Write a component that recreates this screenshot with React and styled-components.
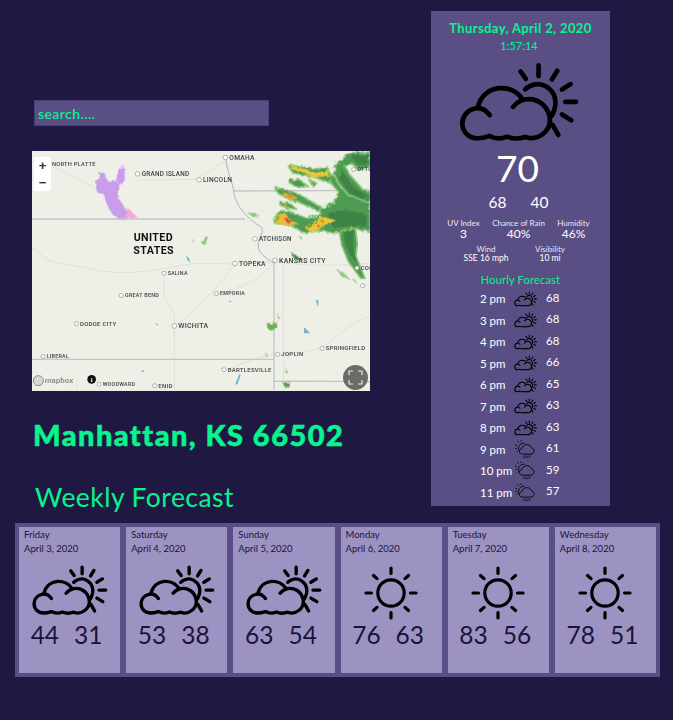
import React from 'react';
import styled, { createGlobalStyle } from 'styled-components';

const GREEN = '#06f58e';
const NAVY = '#1f1842';
const PURPLE = '#5a4f85';

const Global = createGlobalStyle`
body {
    margin: 0;
    background: ${NAVY};
    font-family: "Lato", "Open Sans", sans-serif;
}
`;

const Page = styled.div`
width: 673px;
height: 720px;
padding-top: 11px;
box-sizing: border-box;
overflow: hidden;
`;

const Top = styled.div`
display: flex;
align-items: flex-start;
`;

const Left = styled.div`
width: 338px;
margin-left: 32px;
padding-top: 89px;
`;

const Search = styled.input`
display: block;
box-sizing: border-box;
width: 235px;
height: 26px;
margin-left: 2px;
padding: 0 3px;
border: 1px solid #4a4076;
background: ${PURPLE};
color: ${GREEN};
font: 600 14px "Lato", sans-serif;
letter-spacing: 0.4px;
outline: none;
&::placeholder {
    color: ${GREEN};
    opacity: 1;
}
`;

const MapBox = styled.div`
position: relative;
width: 338px;
height: 240px;
margin-top: 25px;
background: #eef0e7;
overflow: hidden;
svg.base {
    display: block;
    filter: blur(0.35px);
}
`;

const ZoomCtl = styled.div`
position: absolute;
left: 2px;
top: 6px;
width: 17px;
height: 34px;
background: #fff;
border-radius: 2px;
display: flex;
flex-direction: column;
align-items: center;
justify-content: space-around;
font: 700 13px/17px "Liberation Sans", sans-serif;
color: #333;
`;

const Fullscreen = styled.div`
position: absolute;
right: 2px;
bottom: 1px;
width: 25px;
height: 25px;
border-radius: 50%;
background: #6c6c66;
display: flex;
align-items: center;
justify-content: center;
`;

const City = styled.h1`
margin: 29px 0 0 1px;
color: ${GREEN};
font-size: 29px;
line-height: 30px;
font-weight: 900;
letter-spacing: 1.45px;
white-space: nowrap;
-webkit-text-stroke: 0.5px ${GREEN};
`;

const WeekTitle = styled.h2`
margin: 33px 0 0 3px;
color: ${GREEN};
font-size: 26.5px;
line-height: 28px;
font-weight: 400;
letter-spacing: 0.45px;
white-space: nowrap;
`;

const Panel = styled.aside`
box-sizing: border-box;
width: 179px;
height: 495px;
margin-left: 61px;
padding-top: 9px;
background: ${PURPLE};
color: #fff;
text-align: center;
`;

const DateLine = styled.div`
color: ${GREEN};
font-size: 13px;
line-height: 16px;
font-weight: 700;
letter-spacing: 0.38px;
white-space: nowrap;
`;

const Clock = styled.div`
color: ${GREEN};
font-size: 11px;
line-height: 14px;
margin-top: 3px;
padding-right: 3px;
`;

const BigIcon = styled.div`
display: flex;
justify-content: center;
margin-top: 9px;
padding-right: 4px;
height: 81px;
`;

const Temp = styled.div`
font-size: 37px;
line-height: 40px;
margin-top: 5px;
padding-right: 6px;
`;

const HiLo = styled.div`
display: flex;
justify-content: center;
gap: 24px;
font-size: 15.5px;
line-height: 18px;
margin-top: 5px;
padding-right: 4px;
`;

const Stats = styled.div`
display: grid;
grid-template-columns: repeat(3, 55px);
padding-left: 5px;
margin-top: 7px;
`;

const StatsTwo = styled.div`
display: grid;
grid-template-columns: repeat(2, 64px);
padding-left: 23px;
margin-top: 4px;
`;

const Stat = styled.div`
font-size: 8px;
line-height: 10px;
white-space: nowrap;
color: #e9e6f4;
`;

const StatValue = styled.div`
font-size: ${props => props.small ? 8.5 : 12}px;
line-height: ${props => props.small ? 9 : 12}px;
color: #fff;
`;

const HourlyTitle = styled.div`
color: ${GREEN};
font-size: 11px;
line-height: 14px;
margin-top: 10px;
letter-spacing: 0.2px;
`;

const Hourly = styled.div`
margin-top: 1px;
`;

const HourRow = styled.div`
display: flex;
align-items: center;
height: 21.5px;
padding-left: 49px;
font-size: 11.5px;
text-align: left;
`;

const HourTime = styled.span`
width: 33px;
white-space: nowrap;
`;

const HourIcon = styled.span`
display: flex;
justify-content: center;
width: 24px;
`;

const HourTemp = styled.span`
margin-left: 9px;
margin-top: -3px;
`;

const Week = styled.section`
display: flex;
gap: 6px;
box-sizing: border-box;
width: 645px;
height: 154px;
margin: 12px 0 0 15px;
padding: 4px;
background: ${PURPLE};
`;

const Card = styled.article`
flex: 1;
box-sizing: border-box;
padding: 1px 5px;
background: #9c93c2;
color: #1a133b;
`;

const CardLine = styled.div`
font-size: 9.5px;
line-height: 13.5px;
white-space: nowrap;
`;

const CardIcon = styled.div`
display: flex;
justify-content: center;
align-items: ${props => props.cloud ? 'flex-start' : 'center'};
height: 56px;
margin-top: 10px;
`;

const CardTemps = styled.div`
display: flex;
justify-content: center;
gap: 15px;
padding-right: 6px;
font-size: 24.5px;
line-height: 28px;
`;

const CloudSun = ({ width, height, stroke = 14 }) => (
    <svg width={width} height={height} viewBox="25 8 362 242" fill="none" stroke="#000" strokeWidth={stroke} strokeLinecap="round" strokeLinejoin="round">
        <path d="M120 167 C108 150 92 143 75 147 C52 152 38 170 38 192 C38 218 58 236 84 236 C96 236 108 233 120 229 C136 238 156 238 172 231 C188 238 208 238 226 232 C240 238 262 236 278 224 C296 210 304 190 298 168 C290 134 258 114 226 120 C210 123 198 132 190 142" />
        <path d="M84 144 C92 110 118 88 150 86 C176 85 200 96 214 114" />
        <path d="M226 90 C242 74 268 68 290 82 C316 98 326 130 306 168" />
        <path d="M212 36 L228 58 M266 18 L266 50 M322 34 L306 60 M336 90 L362 74 M346 127 L378 127 M336 165 L364 182 M308 196 L325 226" />
    </svg>
);

const Sun = () => (
    <svg width="56" height="56" viewBox="0 0 56 56" fill="none" stroke="#000" strokeWidth="3.2" strokeLinecap="round">
        <circle cx="28" cy="28" r="13.2" />
        <path d="M28 3 V8.5 M28 47.5 V53 M3 28 H8.5 M47.5 28 H53 M10.5 10.5 L14 13.6 M42 42.4 L45.5 45.5 M45.5 10.5 L42 13.6 M14 42.4 L10.5 45.5" />
    </svg>
);

const RainSun = () => (
    <svg width="20" height="19" viewBox="254 518 60 56" fill="none" stroke="#000" strokeWidth="2.7" strokeLinecap="round" strokeLinejoin="round">
        <path d="M278 560 C264 561 264 546 274 544 C277 530 297 526 304 541 C314 544 314 560 302 560 Z" />
        <path d="M266 549 C261 538 268 527 281 527" />
        <path d="M272 520 L272 522 M262 522 L265 525 M256 533 L259 534 M256 543 L259 542 M260 552 L262 550" />
        <path d="M282 565 L279 571 M288 565 L285 571 M294 565 L291 571 M300 565 L297 571" strokeWidth="2.2" />
    </svg>
);

const places = [
    ['NORTH PLATTE', 66, 48, 17, false],
    ['GRAND ISLAND', 335, 78, 19, true],
    ['LINCOLN', 519, 96, 20, true],
    ['OMAHA', 598, 29, 20, true],
    ['ATCHISON', 687, 273, 19, true],
    ['TOPEKA', 627, 347, 20, true],
    ['KANSAS CITY', 747, 338, 21, true],
    ['SALINA', 413, 375, 16, true],
    ['GREAT BEND', 285, 442, 16, true],
    ['EMPORIA', 570, 436, 16, true],
    ['DODGE CITY', 150, 527, 18, true],
    ['WICHITA', 445, 535, 21, true],
    ['SPRINGFIELD', 887, 601, 18, true],
    ['JOPLIN', 754, 619, 18, true],
    ['LIBERAL', 50, 625, 16, true],
    ['BARTLESVILLE', 593, 665, 18, true],
    ['WOODWARD', 218, 708, 16, true],
    ['ENID', 385, 713, 18, true],
];

const Dot = ({ name, x, y, size, dot }) => {
    const r = size >= 19 ? 7 : 6;
    return (
        <g>
            {dot && <circle cx={x - r - 5} cy={y - size / 3} r={r} fill="#fff" stroke="#8a8d8c" strokeWidth="2" />}
            <text x={x} y={y} fontSize={size} fontFamily="Roboto, sans-serif" fontWeight="500" letterSpacing="0.8" fill="#3c3f41">{name}</text>
        </g>
    );
};

// storm cells, drawn 720 units left of where they sit on the map
const cells = [
    'M52 45 L100 50 L140 58 L170 50 L185 80 L197 102 L170 96 L130 80 L70 70 Z',
    'M55 88 L90 90 L115 110 L85 112 L60 100 Z',
    'M115 85 L140 100 L130 110 Z',
    'M15 112 L50 120 L90 135 L155 172 L150 185 L95 160 L60 150 L25 130 Z',
    'M30 155 L60 160 L80 178 L50 175 L30 165 Z',
    'M155 175 L195 155 L205 125 L180 95 L190 70 L210 110 L235 130 L300 155 L300 245 L250 235 L190 250 L150 240 L105 250 L60 225 L15 220 L10 208 L30 182 L60 185 L110 205 L150 195 Z',
    'M200 40 L240 8 L300 8 L300 50 L265 60 L245 40 L225 50 L240 75 L280 120 L300 125 L300 160 L235 135 L205 100 L190 70 Z',
];

const cores = [
    'M170 190 L230 180 L290 195 L290 230 L240 228 L190 232 Z',
    'M240 15 L295 15 L295 40 L265 45 Z',
    'M215 60 L250 110 L295 140 L280 150 L235 125 L210 90 Z',
];

const hot = [
    ['#e6c838', 'M62 48 L100 55 L135 68 L175 62 L178 78 L130 82 L95 65 L65 58 Z'],
    ['#e2ae36', 'M35 128 L60 130 L85 145 L65 150 L40 138 Z'],
    ['#e2ae36', 'M35 160 L55 165 L50 172 Z'],
    ['#e6bc38', 'M25 195 L45 188 L60 210 L85 220 L50 228 L15 218 Z'],
    ['#e6c838', 'M105 235 L135 218 L150 200 L200 210 L165 225 L130 248 Z'],
    ['#e2783a', 'M50 130 L70 140 L60 144 Z M150 208 L165 212 L155 218 Z'],
    ['#dc3a50', 'M42 204 L65 214 L55 222 Z M142 224 L150 226 L144 232 Z'],
];

const specks = [
    ['#8fc777', 'M85 255 L100 266 L92 268 Z'],
    ['#4d9650', 'M65 308 L100 328 L85 332 L66 320 Z'],
    ['#8fc777', 'M200 358 L225 372 L240 388 L215 380 Z M250 385 L262 398 L252 396 Z'],
    ['#8fc777', 'M-70 185 L-30 195 L-50 202 Z'],
    ['#8fc777', 'M-205 282 L-192 258 L-186 262 L-195 285 Z M-232 270 L-227 272 L-231 278 Z'],
    ['#6eae55', 'M-10 518 L5 525 L20 515 L22 530 L5 542 L-8 535 Z M22 490 L30 506 L22 504 Z'],
    ['#9ccf7e', 'M-12 606 L-5 622 L-14 618 Z M46 650 L52 672 L44 668 Z'],
    ['#5d9a58', 'M40 698 L60 696 L58 712 L42 710 Z'],
];

const RadarMap = () => (
    <svg className="base" width="338" height="240" viewBox="6 3 1014 720">
        <defs>
            <filter id="soft" x="-5%" y="-5%" width="110%" height="110%">
                <feTurbulence type="fractalNoise" baseFrequency="0.09" numOctaves="2" seed="4" result="n" />
                <feDisplacementMap in="SourceGraphic" in2="n" scale="14" result="d" />
                <feGaussianBlur in="d" stdDeviation="1.6" />
            </filter>
        </defs>
        <rect x="6" y="3" width="1014" height="720" fill="#eef0e7" />
        <g fill="none" stroke="#dfe1da" strokeWidth="3">
            <path d="M70 50 L170 100 L210 125 M320 90 L500 88 L590 30" />
            <path d="M6 296 C30 300 40 335 90 340 C150 345 200 368 280 368 C350 368 420 350 500 340 L615 342 L735 335" />
            <path d="M403 372 L403 440 L433 490 L433 720" />
            <path d="M433 530 C490 490 540 440 615 342 M560 432 C620 420 690 390 735 335" />
            <path d="M735 335 C800 345 900 350 1020 340 M740 615 C800 610 860 600 880 590 C930 560 950 520 1020 500" />
            <path d="M140 720 L140 690 M590 660 C640 640 680 620 740 612 M760 340 L760 720" />
        </g>
        <g fill="none" stroke="#c3c5c9" strokeWidth="4">
            <path d="M6 207 L645 207 M610 123 L1020 121 M732 340 L732 720 M6 628 L732 628 M732 693 L1020 695" />
        </g>
        <path d="M588 30 C592 70 610 100 612 130 C620 170 650 205 695 232 C705 255 672 270 690 305 C705 325 720 330 735 340" fill="none" stroke="#aeb4ba" strokeWidth="3" />
        <g fill="#7ab3cf">
            <path d="M468 316 L478 326 L480 338 L472 330Z" />
            <path d="M858 448 L866 452 L864 470 L860 462Z" />
            <path d="M822 532 L828 536 L840 550 L822 550Z" />
            <path d="M628 672 L632 676 L622 704 L616 702Z" />
            <path d="M374 518 L384 524 L382 528Z M598 450 L606 456 L598 456Z M336 660 L344 662 L336 668Z" />
        </g>
        <g transform="translate(720 0)">
            <path d="M205 225 L255 225 L262 280 L258 318 L285 385 L272 385 L235 335 L215 285 Z" fill="#4f9a53" stroke="#8cc67a" strokeWidth="5" strokeLinejoin="round" />
            <path d="M225 232 L250 232 L250 300 L262 340 L240 315 L222 270 Z" fill="#3d8344" />
        </g>
        <g filter="url(#soft)">
            <path transform="translate(180 30)" d="M30 38 L46 42 L54 66 L78 62 L84 28 L102 20 L104 60 L86 86 L82 110 L96 130 L108 150 L128 172 L92 180 L66 162 L50 132 L40 102 L22 98 L16 74 Z" fill="#c99dea" />
            <path transform="translate(180 30)" d="M105 175 L115 145 L145 175 Z" fill="#f3a9d8" />
            <g transform="translate(720 0)">
                {cells.map((d, i) => <path key={i} d={d} fill="#4f9a53" stroke="#8cc67a" strokeWidth="5" strokeLinejoin="round" />)}
                {cores.map((d, i) => <path key={i} d={d} fill="#3d8344" />)}
                {specks.map((s, i) => <path key={i} d={s[1]} fill={s[0]} />)}
                {hot.map((s, i) => <path key={i} d={s[1]} fill={s[0]} />)}
            </g>
        </g>
        {places.map(p => <Dot key={p[0]} name={p[0]} x={p[1]} y={p[2]} size={p[3]} dot={p[4]} />)}
        <Dot name="COL" x={992} y={360} size={18} dot />
        <Dot name="OTTU" x={982} y={64} size={16} dot />
        <circle cx="998" cy="407" r="6" fill="#fff" stroke="#8a8d8c" strokeWidth="2" />
        <text x="311" y="273" fontSize="32" fontWeight="700" fontFamily="Roboto, sans-serif" letterSpacing="1.2" fill="#111">UNITED</text>
        <text x="310" y="313" fontSize="32" fontWeight="700" fontFamily="Roboto, sans-serif" letterSpacing="1.2" fill="#111">STATES</text>
        <circle cx="25" cy="692" r="15" fill="#d8d8d4" stroke="#8a8a88" strokeWidth="3" />
        <text x="44" y="700" fontSize="24" fontWeight="700" fontFamily="Roboto, sans-serif" fill="#8c8c8a" stroke="#fff" strokeWidth="1" paintOrder="stroke">mapbox</text>
        <circle cx="185" cy="688" r="13" fill="#111" />
        <text x="185" y="696" fontSize="20" fontWeight="700" fontFamily="Liberation Serif, serif" fill="#fff" textAnchor="middle">i</text>
    </svg>
);

const hours = [
    ['2 pm', 68], ['3 pm', 68], ['4 pm', 68], ['5 pm', 66], ['6 pm', 65],
    ['7 pm', 63], ['8 pm', 63], ['9 pm', 61, true], ['10 pm', 59, true], ['11 pm', 57, true],
];

const days = [
    ['Friday', 'April 3, 2020', 44, 31, 'cloud'],
    ['Saturday', 'April 4, 2020', 53, 38, 'cloud'],
    ['Sunday', 'April 5, 2020', 63, 54, 'cloud'],
    ['Monday', 'April 6, 2020', 76, 63, 'sun'],
    ['Tuesday', 'April 7, 2020', 83, 56, 'sun'],
    ['Wednesday', 'April 8, 2020', 78, 51, 'sun'],
];

export default function App() {
    return (
        <Page>
            <Global />
            <Top>
                <Left>
                    <Search placeholder="search...." />
                    <MapBox>
                        <RadarMap />
                        <ZoomCtl><span>+</span><span>−</span></ZoomCtl>
                        <Fullscreen>
                            <svg width="15" height="15" viewBox="0 0 15 15" fill="none" stroke="#e8e8e4" strokeWidth="1.2">
                                <path d="M1 5 V1 H5 M10 1 H14 V5 M14 10 V14 H10 M5 14 H1 V10" />
                            </svg>
                        </Fullscreen>
                    </MapBox>
                    <City>Manhattan, KS 66502</City>
                    <WeekTitle>Weekly Forecast</WeekTitle>
                </Left>
                <Panel>
                    <DateLine>Thursday, April 2, 2020</DateLine>
                    <Clock>1:57:14</Clock>
                    <BigIcon><CloudSun width={121} height={81} /></BigIcon>
                    <Temp>70</Temp>
                    <HiLo><span>68</span><span>40</span></HiLo>
                    <Stats>
                        <div><Stat>UV Index</Stat><StatValue>3</StatValue></div>
                        <div><Stat>Chance of Rain</Stat><StatValue>40%</StatValue></div>
                        <div><Stat>Humidity</Stat><StatValue>46%</StatValue></div>
                    </Stats>
                    <StatsTwo>
                        <div><Stat>Wind</Stat><StatValue small>SSE 16 mph</StatValue></div>
                        <div><Stat>Visibility</Stat><StatValue small>10 mi</StatValue></div>
                    </StatsTwo>
                    <HourlyTitle>Hourly Forecast</HourlyTitle>
                    <Hourly>
                        {hours.map(h => (
                            <HourRow key={h[0]}>
                                <HourTime>{h[0]}</HourTime>
                                <HourIcon>{h[2] ? <RainSun /> : <CloudSun width={23} height={16} stroke={17} />}</HourIcon>
                                <HourTemp>{h[1]}</HourTemp>
                            </HourRow>
                        ))}
                    </Hourly>
                </Panel>
            </Top>
            <Week>
                {days.map(d => (
                    <Card key={d[0]}>
                        <CardLine>{d[0]}</CardLine>
                        <CardLine>{d[1]}</CardLine>
                        <CardIcon cloud={d[4] === 'cloud' ? 1 : undefined}>
                            {d[4] === 'cloud' ? <CloudSun width={77} height={51} stroke={16} /> : <Sun />}
                        </CardIcon>
                        <CardTemps><span>{d[2]}</span><span>{d[3]}</span></CardTemps>
                    </Card>
                ))}
            </Week>
        </Page>
    );
}
